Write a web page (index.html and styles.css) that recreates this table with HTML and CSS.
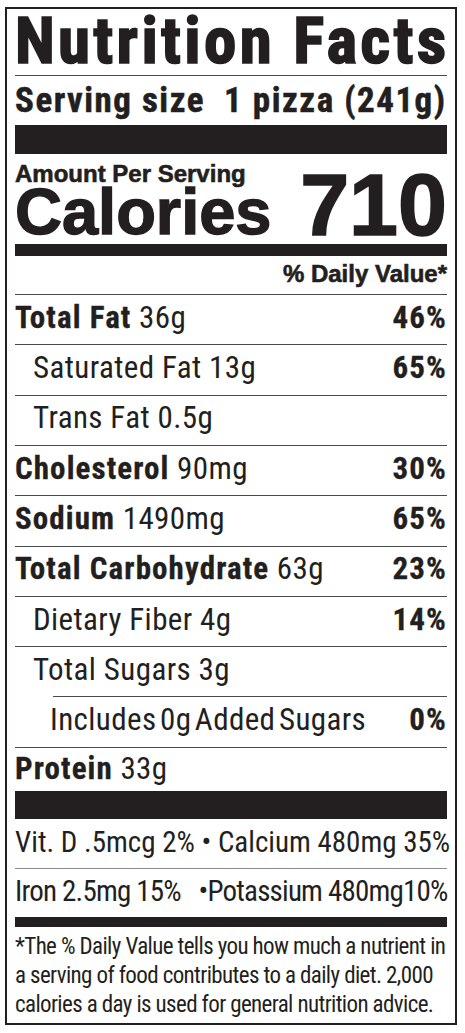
FILE: index.html
```html
<!DOCTYPE html>
<html lang="en">
<head>
  <meta charset="UTF-8" />
  <meta name="viewport" content="width=device-width, initial-scale=1.0"/>
  <title>Nutrition Facts</title>
  <link rel="stylesheet" href="styles.css">
</head>
<body>
  <div class="label">
    <h1 class="title">Nutrition Facts</h1>
    <div class="serving">Serving size&nbsp; 1 pizza (241g)</div>
    <div class="bar bar-top"></div>

    <div class="calories">
      <div class="calories-left">
        <div class="amount">Amount Per Serving</div>
        <div class="calories-label">Calories</div>
      </div>
      <div class="calories-value">710</div>
    </div>
    <div class="bar bar-mid"></div>

    <div class="dv-head">% Daily Value*</div>

    <div class="row"><span><b>Total Fat</b> 36g</span><b>46%</b></div>
    <div class="row sub"><span>Saturated Fat 13g</span><b>65%</b></div>
    <div class="row sub"><span>Trans Fat 0.5g</span></div>
    <div class="row"><span><b>Cholesterol</b> 90mg</span><b>30%</b></div>
    <div class="row"><span><b>Sodium</b> 1490mg</span><b>65%</b></div>
    <div class="row"><span><b>Total Carbohydrate</b> 63g</span><b>23%</b></div>
    <div class="row sub"><span>Dietary Fiber 4g</span><b>14%</b></div>
    <div class="row sub sugars"><span>Total Sugars 3g</span></div>
    <div class="row added"><span>Includes 0g Added Sugars</span><b>0%</b></div>
    <div class="row protein"><span><b>Protein</b> 33g</span></div>
    <div class="bar bar-low"></div>

    <div class="vit first">Vit. D .5mcg 2% • Calcium 480mg 35%</div>
    <div class="vit tight">Iron 2.5mg 15% &nbsp;&nbsp;•Potassium 480mg10%</div>
    <div class="bar bar-thin"></div>

    <p class="note">*The % Daily Value tells you how much a nutrient in<br>a serving of food contributes to a daily diet. 2,000<br>calories a day is used for general nutrition advice.</p>
  </div>
</body>
</html>
```

FILE: styles.css
```css
body {
  margin: 0;
  background: #fff;
  color: #231f20;
  font-family: "Roboto Condensed", "Liberation Sans Narrow", sans-serif;
}

.label {
  box-sizing: border-box;
  width: 452px;
  margin: 7px 0 0 5px;
  padding: 0 8px;
  border: 2px solid #231f20;
}

.title {
  margin: 0;
  padding-bottom: 2px;
  border-bottom: 1px solid #4a4a4a;
  font-size: 65px;
  line-height: 64px;
  font-weight: bold;
  letter-spacing: 3.3px;
  -webkit-text-stroke: 1.6px #231f20;
  white-space: nowrap;
}

.serving {
  height: 49px;
  font-size: 35px;
  line-height: 49px;
  font-weight: bold;
  letter-spacing: 1.5px;
  -webkit-text-stroke: 0.5px #231f20;
  white-space: nowrap;
}

.bar {
  background: #231f20;
}

.bar-top { height: 29px; }
.bar-mid { height: 12px; }
.bar-low { height: 28px; }
.bar-thin { height: 10px; }

.calories {
  display: flex;
  justify-content: space-between;
  align-items: flex-end;
  height: 90px;
  padding: 8px 0 6px;
  box-sizing: border-box;
  font-family: "Liberation Sans", Arial, sans-serif;
  font-weight: bold;
}

.amount {
  font-size: 24px;
  line-height: 24px;
  -webkit-text-stroke: 0.6px #231f20;
}

.calories-label {
  font-size: 65px;
  line-height: 52px;
  -webkit-text-stroke: 1.4px #231f20;
}

.calories-value {
  font-size: 88px;
  line-height: 66px;
  -webkit-text-stroke: 1.6px #231f20;
}

.dv-head {
  box-sizing: border-box;
  height: 39px;
  padding-top: 6px;
  border-bottom: 1px solid #4a4a4a;
  text-align: right;
  font-family: "Liberation Sans", Arial, sans-serif;
  font-size: 24px;
  line-height: 24px;
  font-weight: bold;
  -webkit-text-stroke: 0.6px #231f20;
}

.row {
  display: flex;
  justify-content: space-between;
  align-items: center;
  box-sizing: border-box;
  height: 50.33px;
  padding-bottom: 5px;
  border-bottom: 1px solid #4a4a4a;
  font-size: 31px;
  letter-spacing: 0.4px;
  white-space: nowrap;
}

.row b {
  letter-spacing: 1.1px;
  -webkit-text-stroke: 0.3px #231f20;
}

.row.sub {
  padding-left: 18px;
}

.row.sugars {
  border-bottom-color: transparent;
  background: linear-gradient(#4a4a4a, #4a4a4a) no-repeat right bottom / calc(100% - 38px) 1px;
}

.row.added {
  padding-left: 35px;
  word-spacing: -4px;
}

.row.protein {
  height: 43px;
  padding-bottom: 2px;
  border-bottom: none;
}

.vit {
  box-sizing: border-box;
  height: 48px;
  padding-bottom: 3px;
  display: flex;
  align-items: center;
  font-size: 29px;
  white-space: nowrap;
}

.vit.first {
  height: 50px;
  border-bottom: 1px solid #8c8c8c;
}

.vit.tight {
  letter-spacing: -0.8px;
}

.note {
  box-sizing: border-box;
  height: 96px;
  margin: 0;
  padding-top: 5.5px;
  font-size: 23px;
  line-height: 29px;
  letter-spacing: -0.62px;
  white-space: nowrap;
}
```
